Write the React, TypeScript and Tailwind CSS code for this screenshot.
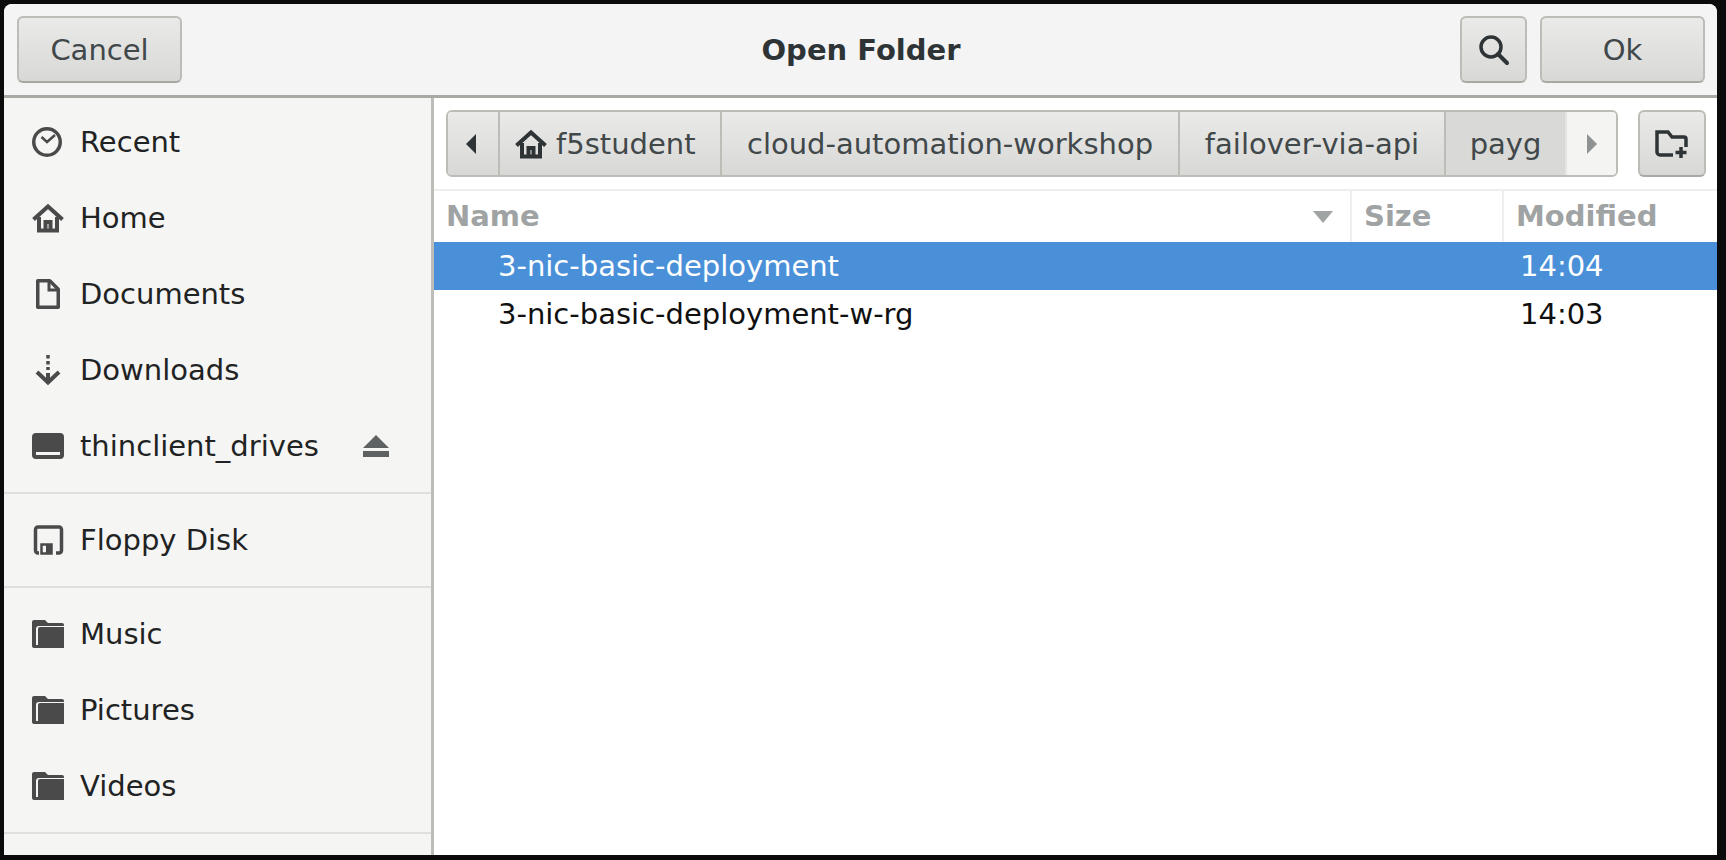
import React from 'react';

const FONT = "font-['DejaVu_Sans',sans-serif]";

const ClockIcon = () => (
  <svg viewBox="0 0 32 32" className="w-8 h-8 text-[#4a4a4a]" fill="none" stroke="currentColor">
    <circle cx="15" cy="16" r="13.25" strokeWidth="3.5" />
    <path d="M9.5 11l5.5 5 8-7" strokeWidth="2.5" />
  </svg>
);

const HomeIcon = ({ className }: { className: string }) => (
  <svg viewBox="0 0 32 32" className={className} fill="none" stroke="currentColor">
    <path d="M1.5 17.5L16 4.5l14.5 13" strokeWidth="4" />
    <path d="M7 15v13.5h18V15M13.5 29v-9h5v9" strokeWidth="4" />
  </svg>
);

const DocIcon = () => (
  <svg viewBox="0 0 32 32" className="w-8 h-8 text-[#4a4a4a]" fill="none" stroke="currentColor">
    <path d="M5.75 2.75h12l8.5 8.5v18h-20.5z" strokeWidth="3.5" strokeLinejoin="round" />
    <path d="M17 3v9h9" strokeWidth="3" />
  </svg>
);

const DownloadIcon = () => (
  <svg viewBox="0 0 32 32" className="w-8 h-8 text-[#4a4a4a]" fill="none" stroke="currentColor">
    <path d="M16 1v3.5M16 7v3.5M16 13v3" strokeWidth="3.5" />
    <path d="M16 19v9M5 18l11 10.5L27 18" strokeWidth="4" />
  </svg>
);

const DriveIcon = () => (
  <svg viewBox="0 0 32 32" className="w-8 h-8 text-[#4a4a4a]" fill="currentColor">
    <path fillRule="evenodd" d="M4 3h24a4 4 0 0 1 4 4v18a4 4 0 0 1-4 4H4a4 4 0 0 1-4-4V7a4 4 0 0 1 4-4zm0 19v3h24v-3z" />
  </svg>
);

const EjectIcon = () => (
  <svg viewBox="0 0 26 24" className="w-[26px] h-6 text-[#5e6262]" fill="currentColor">
    <path d="M13 1l13 13H0zM0 17h26v6H0z" />
  </svg>
);

const FloppyIcon = () => (
  <svg viewBox="0 0 32 32" className="w-8 h-8 text-[#4a4a4a]" fill="none" stroke="currentColor">
    <path d="M7 29H6a2.500 2.500 0 0 1-2.500-2.500V5.500A2.500 2.500 0 0 1 6 3h21a2.500 2.500 0 0 1 2.500 2.500v21A2.500 2.500 0 0 1 27 29h-3" strokeWidth="3.5" />
    <path d="M9.500 20.500h10v9h-10z" strokeWidth="2.500" />
    <path d="M14 21h5v8h-5z" fill="currentColor" stroke="none" />
  </svg>
);

const FolderIcon = () => (
  <svg viewBox="0 0 32 28" className="w-8 h-7 text-[#4a4a4a]" fill="currentColor">
    <path d="M2 0h11l3 3h14a2 2 0 0 1 2 2v1H7a3 3 0 0 0-3 3v16H6V9a2 2 0 0 1 2-2h24v19a2 2 0 0 1-2 2H2a2 2 0 0 1-2-2V2a2 2 0 0 1 2-2z" />
    <path d="M7 10h25v18H7z" />
  </svg>
);

const places = [
  { label: 'Recent', icon: <ClockIcon /> },
  { label: 'Home', icon: <HomeIcon className="w-8 h-8 text-[#4a4a4a]" /> },
  { label: 'Documents', icon: <DocIcon /> },
  { label: 'Downloads', icon: <DownloadIcon /> },
  { label: 'thinclient_drives', icon: <DriveIcon />, eject: true },
];

const SidebarRow = ({ label, icon, eject }: { label: string; icon: React.ReactNode; eject?: boolean }) => (
  <div className="h-[76px] flex items-center pl-7 pr-[42px]">
    <div className="w-8 flex justify-center shrink-0">{icon}</div>
    <span className="ml-[16px] pt-[2px] text-[29px] text-[#1f2323]">{label}</span>
    {eject && <span className="ml-auto flex"><EjectIcon /></span>}
  </div>
);

const btn =
  'flex items-center justify-center border-2 border-[#bdbcb6] border-b-[#a8a7a1] rounded-md bg-gradient-to-b from-[#eaeae9] to-[#d8d8d6] text-[#41484a] text-[29px]';

const Crumb = ({ label, className }: { label: string; className: string }) => (
  <div className={`flex items-center justify-center pt-[2px] h-full border-l-2 border-[#bdbcb6] ${className}`}>{label}</div>
);

export default function App() {
  return (
    <div className={`w-[1726px] h-[860px] bg-[#0b0b0b] pt-1 pl-1 pr-[9px] pb-[5px] ${FONT}`}>
      <div className="w-full h-full flex flex-col bg-white rounded-t-lg overflow-hidden">
        <header className="h-[94px] shrink-0 flex items-center justify-between pl-[13px] pr-[12px] bg-[#f4f4f4] border-b-[3px] border-[#a9a8a2]">
          <button className={`${btn} w-[165px] h-[67px] pt-[3px]`}>Cancel</button>
          <div className="text-[29px] font-bold text-[#2e3436] ml-[80px] pt-[2px]">Open Folder</div>
          <div className="flex gap-[13px]">
            <button className={`${btn} w-[67px] h-[67px]`}>
              <svg viewBox="0 0 32 32" className="w-8 h-8 text-[#2e3436]" fill="none" stroke="currentColor">
                <circle cx="13" cy="13" r="10" strokeWidth="3.5" />
                <path d="M20 20l9 9" strokeWidth="4" strokeLinecap="round" />
              </svg>
            </button>
            <button className={`${btn} w-[165px] h-[67px] pt-[3px]`}>Ok</button>
          </div>
        </header>

        <div className="flex-1 flex min-h-0">
          <aside className="w-[430px] shrink-0 bg-[#f5f5f4] border-r-[3px] border-[#bcbcb9] pt-[6px]">
            {places.map(p => (
              <SidebarRow key={p.label} {...p} />
            ))}
            <div className="mt-2 mb-2 h-0.5 bg-[#dfdfdd]" />
            <SidebarRow label="Floppy Disk" icon={<FloppyIcon />} />
            <div className="mt-2 mb-2 h-0.5 bg-[#dfdfdd]" />
            <SidebarRow label="Music" icon={<FolderIcon />} />
            <SidebarRow label="Pictures" icon={<FolderIcon />} />
            <SidebarRow label="Videos" icon={<FolderIcon />} />
            <div className="mt-2 h-0.5 bg-[#dfdfdd]" />
          </aside>

          <main className="flex-1 flex flex-col min-w-0 bg-white">
            <div className="h-[93px] shrink-0 flex items-start pt-3 pl-[12px] pr-[11px] border-b-2 border-[#eeeeec] gap-[20px]">
              <div className="flex-1 h-[67px] flex items-stretch border-2 border-[#bdbcb6] rounded-md overflow-hidden text-[29px] text-[#41484a]">
                <div className="w-[50px] flex items-center justify-center pr-1 bg-gradient-to-b from-[#eaeae9] to-[#d8d8d6]">
                  <svg viewBox="0 0 12 20" className="w-3 h-5 text-[#2e3436]" fill="currentColor">
                    <path d="M11 0v20L1 10z" />
                  </svg>
                </div>
                <div className="w-[222px] flex items-center pl-[15px] gap-[9px] border-l-2 border-[#bdbcb6] bg-gradient-to-b from-[#eaeae9] to-[#d8d8d6]">
                  <HomeIcon className="w-8 h-8 text-[#2e3436]" />
                  <span className="pt-[2px]">f5student</span>
                </div>
                <Crumb label="cloud-automation-workshop" className="w-[458px] bg-gradient-to-b from-[#eaeae9] to-[#d8d8d6]" />
                <Crumb label="failover-via-api" className="w-[266px] bg-gradient-to-b from-[#eaeae9] to-[#d8d8d6]" />
                <Crumb label="payg" className="w-[121px] bg-[#d9d9d7]" />
                <div className="flex-1 flex items-center justify-center border-l-2 border-[#e4e4e2] bg-[#f4f4f3]">
                  <svg viewBox="0 0 12 20" className="w-3 h-5 text-[#8f9292]" fill="currentColor">
                    <path d="M1 0v20l10-10z" />
                  </svg>
                </div>
              </div>
              <button className={`${btn} w-[68px] h-[67px]`}>
                <svg viewBox="0 0 34 32" className="w-[34px] h-8 text-[#2e3436]" fill="none" stroke="currentColor">
                  <path d="M18 27H5a3 3 0 0 1-3-3V4h11l4 5h12a2 2 0 0 1 2 2v8" strokeWidth="3.5" />
                  <path d="M26 19v11M20.500 24.500h11" strokeWidth="3.5" />
                </svg>
              </button>
            </div>

            <div className="h-[51px] shrink-0 flex text-[29px] font-bold text-[#a0a3a3]">
              <div className="w-[918px] flex items-center justify-between pl-[12px] pr-[17px] border-r-2 border-[#eeeeec]">
                Name
                <svg viewBox="0 0 20 12" className="w-5 h-3 text-[#a0a3a3]" fill="currentColor">
                  <path d="M0 0h20L10 12z" />
                </svg>
              </div>
              <div className="w-[152px] flex items-center pl-3 border-r-2 border-[#eeeeec]">Size</div>
              <div className="flex-1 flex items-center pl-3">Modified</div>
            </div>

            <div className="h-12 shrink-0 flex items-center pt-[2px] bg-[#4a90d9] text-white text-[29px]">
              <span className="w-[1086px] pl-[64px]">3-nic-basic-deployment</span>
              <span>14:04</span>
            </div>
            <div className="h-12 shrink-0 flex items-center pt-[2px] text-[#101010] text-[29px]">
              <span className="w-[1086px] pl-[64px]">3-nic-basic-deployment-w-rg</span>
              <span>14:03</span>
            </div>
          </main>
        </div>
      </div>
    </div>
  );
}
